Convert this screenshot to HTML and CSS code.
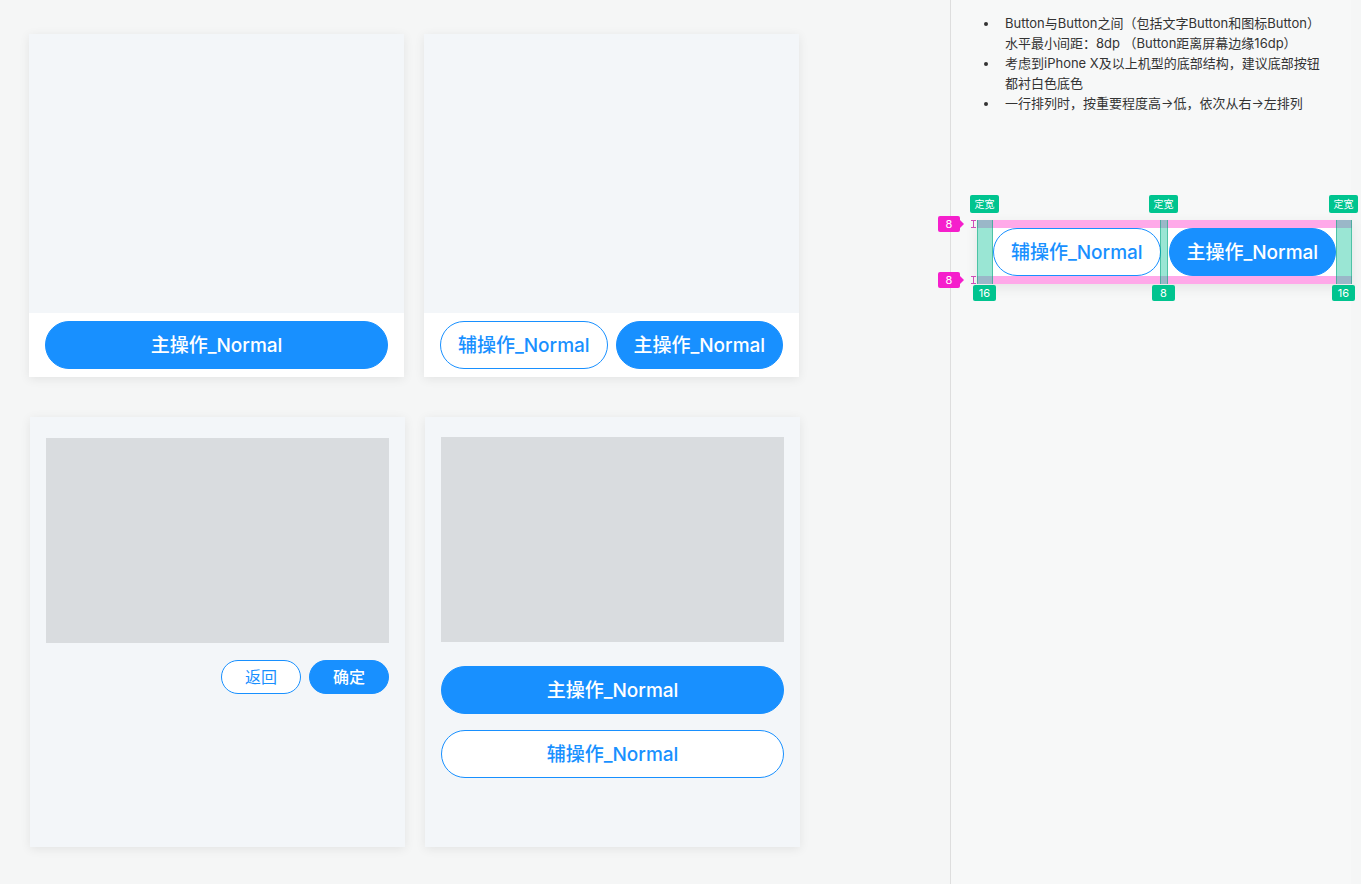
FILE: index.html
```html
<!DOCTYPE html>
<html lang="zh-CN">
<head>
    <meta charset="UTF-8">
    <title>底部按钮规范</title>
    <link rel="stylesheet" href="styles.css">
</head>
<body>

<div class="page">
    <section class="board">
        <!-- 单个主按钮 -->
        <div class="card">
            <div class="card-blank"></div>
            <div class="bottom-bar">
                <button class="btn btn-primary btn-full">主操作_Normal</button>
            </div>
        </div>

        <!-- 辅 + 主 -->
        <div class="card">
            <div class="card-blank"></div>
            <div class="bottom-bar">
                <button class="btn btn-ghost btn-half">辅操作_Normal</button>
                <button class="btn btn-primary btn-half">主操作_Normal</button>
            </div>
        </div>

        <!-- 弹窗内小按钮 -->
        <div class="card card-pad">
            <div class="placeholder"></div>
            <div class="small-row">
                <button class="btn btn-ghost btn-small">返回</button>
                <button class="btn btn-primary btn-small">确定</button>
            </div>
        </div>

        <!-- 竖排 -->
        <div class="card card-pad card-pad-b">
            <div class="placeholder"></div>
            <button class="btn btn-primary btn-full stack-first">主操作_Normal</button>
            <button class="btn btn-ghost btn-full stack-next">辅操作_Normal</button>
        </div>
    </section>

    <aside class="notes">
        <ul class="rules">
            <li>Button与Button之间（包括文字Button和图标Button）水平最小间距：8dp （Button距离屏幕边缘16dp）</li>
            <li>考虑到iPhone X及以上机型的底部结构，建议底部按钮都衬白色底色</li>
            <li>一行排列时，按重要程度高→低，依次从右→左排列</li>
        </ul>

        <div class="spec">
            <div class="spec-bar">
                <button class="btn btn-ghost btn-half">辅操作_Normal</button>
                <button class="btn btn-primary btn-half">主操作_Normal</button>
            </div>

            <div class="pink-strip pink-top"></div>
            <div class="pink-strip pink-bottom"></div>

            <div class="green-col col-left"></div>
            <div class="green-col col-mid"></div>
            <div class="green-col col-right"></div>

            <span class="tag tag-green tag-top" style="left: -7px">定宽</span>
            <span class="tag tag-green tag-top" style="left: 172px">定宽</span>
            <span class="tag tag-green tag-top" style="left: 352px">定宽</span>

            <span class="tag tag-green tag-bottom" style="left: -4px">16</span>
            <span class="tag tag-green tag-bottom" style="left: 175px">8</span>
            <span class="tag tag-green tag-bottom" style="left: 355px">16</span>

            <span class="tag tag-pink" style="top: -4px">8</span>
            <span class="tag tag-pink" style="top: 52px">8</span>

            <span class="bracket" style="top: 0"></span>
            <span class="bracket" style="top: 56px"></span>
        </div>
    </aside>
</div>

</body>
</html>
```

FILE: styles.css
```css
body {
    margin: 0;
    background-color: #f5f6f6;
    font-family: "Inter", "Noto Sans CJK SC", sans-serif;
    color: #333;
}
.page {
    display: flex;
    min-height: 884px;
}
.board {
    width: 950px;
    box-sizing: border-box;
    padding: 34px 0 0 29px;
    display: grid;
    grid-template-columns: 375px 375px;
    grid-template-rows: 343px 430px;
    column-gap: 20px;
    row-gap: 40px;
    align-content: start;
}
.card {
    background-color: #f3f6f9;
    box-shadow: 0 2px 10px rgba(0, 0, 0, 0.08);
    display: flex;
    flex-direction: column;
}
.card-blank {
    flex: 1;
}
.bottom-bar {
    height: 64px;
    box-sizing: border-box;
    background-color: #fff;
    padding: 8px 16px;
    display: flex;
    gap: 8px;
}
.card-pad {
    padding: 21px 16px 0 16px;
    margin: 0 -1px 0 1px;
}
.card-pad-b {
    padding-top: 20px;
}
.placeholder {
    height: 205px;
    background-color: #d9dcdf;
}

.btn {
    font-family: inherit;
    font-weight: 500;
    border-radius: 24px;
    height: 48px;
    font-size: 19px;
    line-height: 1;
    cursor: pointer;
    padding: 0;
    box-sizing: border-box;
}
.btn-primary {
    background-color: #1890ff;
    border: 1px solid #1890ff;
    color: #fff;
}
.btn-ghost {
    background-color: #fff;
    border: 1px solid #1890ff;
    color: #1890ff;
}
.btn-full {
    width: 100%;
}
.btn-half {
    flex: 1;
}
.small-row {
    display: flex;
    justify-content: flex-end;
    gap: 8px;
    margin-top: 17px;
}
.btn-small {
    width: 80px;
    height: 34px;
    border-radius: 17px;
    font-size: 16px;
}
.btn-small.btn-ghost {
    font-weight: 400;
}
.stack-first {
    margin-top: 24px;
}
.stack-next {
    margin-top: 16px;
}

/* right panel */
.notes {
    width: 400px;
    background-color: #f7f8f8;
    border-left: 1px solid #dedede;
}
.rules {
    margin: 13px 0 0 0;
    padding: 0 22px 0 48px;
    font-size: 13px;
    line-height: 20px;
    color: #333;
}
.rules li {
    padding-left: 6px;
}
.spec {
    position: relative;
    width: 375px;
    margin: 107px 0 0 26px;
}
.spec-bar {
    background-color: #fff;
    padding: 8px 16px;
    display: flex;
    gap: 8px;
    box-shadow: 0 4px 12px rgba(0, 0, 0, 0.08);
}
.pink-strip {
    position: absolute;
    left: 0;
    right: 0;
    height: 8px;
    background-color: rgba(255, 140, 225, 0.75);
}
.pink-top {
    top: 0;
}
.pink-bottom {
    bottom: 0;
}
.green-col {
    position: absolute;
    top: 0;
    bottom: 0;
    background-color: rgba(30, 200, 160, 0.45);
    border-left: 1px solid rgba(0, 160, 120, 0.5);
    border-right: 1px solid rgba(0, 160, 120, 0.5);
    box-sizing: border-box;
}
.col-left {
    left: 0;
    width: 16px;
}
.col-mid {
    left: 183px;
    width: 8px;
}
.col-right {
    right: 0;
    width: 16px;
}
.tag {
    position: absolute;
    font-size: 11px;
    line-height: 16px;
    color: #fff;
    border-radius: 2px;
    text-align: center;
}
.tag-green {
    background-color: #00c48f;
    padding: 0 3px;
}
.tag-top {
    top: -25px;
    font-size: 10px;
    line-height: 18px;
    width: 23px;
}
.tag-bottom {
    top: 65px;
    min-width: 17px;
}
.tag-pink {
    left: -39px;
    width: 22px;
    background-color: #f51fcc;
}
.tag-pink::after {
    content: "";
    position: absolute;
    right: -4px;
    top: 4px;
    border-left: 4px solid #f51fcc;
    border-top: 4px solid transparent;
    border-bottom: 4px solid transparent;
}
.bracket {
    position: absolute;
    left: -6px;
    width: 5px;
    height: 8px;
    box-sizing: border-box;
    border-top: 1px solid #d04cb8;
    border-bottom: 1px solid #d04cb8;
    background: linear-gradient(#d04cb8, #d04cb8) center / 1px 100% no-repeat;
}
```
